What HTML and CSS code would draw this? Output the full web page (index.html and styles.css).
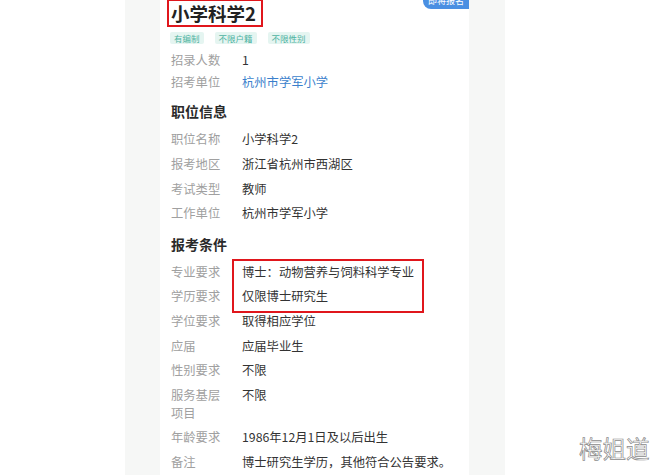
FILE: index.html
```html
<!DOCTYPE html>
<html lang="zh-CN">
<head>
<meta charset="utf-8">
<link rel="stylesheet" href="styles.css">
</head>
<body>
<div class="page">
  <div class="panel">
    <div class="card">
      <div class="badge">即将报名</div>
      <div class="title">小学科学2</div>
      <div class="tags">
        <span class="tag">有编制</span>
        <span class="tag">不限户籍</span>
        <span class="tag">不限性别</span>
      </div>
      <div class="row tight"><span class="label">招录人数</span><span class="value">1</span></div>
      <div class="row tight"><span class="label">招考单位</span><span class="value link">杭州市学军小学</span></div>

      <div class="heading">职位信息</div>
      <div class="row"><span class="label">职位名称</span><span class="value">小学科学2</span></div>
      <div class="row"><span class="label">报考地区</span><span class="value">浙江省杭州市西湖区</span></div>
      <div class="row"><span class="label">考试类型</span><span class="value">教师</span></div>
      <div class="row"><span class="label">工作单位</span><span class="value">杭州市学军小学</span></div>

      <div class="heading">报考条件</div>
      <div class="highlight">
        <div class="row"><span class="label">专业要求</span><span class="value">博士：动物营养与饲料科学专业</span></div>
        <div class="row"><span class="label">学历要求</span><span class="value">仅限博士研究生</span></div>
      </div>
      <div class="row"><span class="label">学位要求</span><span class="value">取得相应学位</span></div>
      <div class="row"><span class="label">应届</span><span class="value">应届毕业生</span></div>
      <div class="row"><span class="label">性别要求</span><span class="value">不限</span></div>
      <div class="row"><span class="label">服务基层项目</span><span class="value">不限</span></div>
      <div class="row"><span class="label">年龄要求</span><span class="value">1986年12月1日及以后出生</span></div>
      <div class="row"><span class="label">备注</span><span class="value">博士研究生学历，其他符合公告要求。</span></div>
    </div>
  </div>
  <div class="watermark">梅姐道</div>
</div>
</body>
</html>
```

FILE: styles.css
```css
* { box-sizing: border-box; }
html, body {
  margin: 0;
  padding: 0;
  background: #ffffff;
}
body {
  width: 664px;
  height: 475px;
  overflow: hidden;
  font-family: "Noto Sans CJK SC", "Noto Sans", sans-serif;
}
.page {
  position: relative;
  display: flex;
  height: 475px;
  padding-left: 125px;
}
.panel {
  width: 380px;
  height: 475px;
  background: #f6f7f6;
  padding: 0 36px 0 35px;
}
.card {
  position: relative;
  width: 309px;
  height: 475px;
  background: #ffffff;
  padding-left: 11px;
}
.badge {
  position: absolute;
  top: -7px;
  right: 0;
  width: 46px;
  height: 16px;
  line-height: 16px;
  background: #4a8fe2;
  color: #ffffff;
  font-size: 9px;
  text-align: center;
  border-radius: 0 0 0 8px;
}
.title {
  display: inline-block;
  margin: -1px 0 0 -4px;
  padding: 0 5px 0 2px;
  border: 2px solid #e0161c;
  font-size: 18.5px;
  line-height: 24px;
  font-weight: 700;
  color: #222222;
}
.tags {
  display: flex;
  gap: 11px;
  margin-top: 5px;
  margin-left: -1px;
}
.tag {
  display: inline-block;
  height: 12px;
  line-height: 12px;
  padding: 0 4px;
  font-size: 8.5px;
  color: #4fb3a2;
  background: #e5f5f1;
  border-radius: 2px;
}
.row {
  display: flex;
  font-size: 12.3px;
  line-height: 17.5px;
  padding: 3.6px 0;
}
.row.tight {
  padding: 2.45px 0;
}
.tags + .row.tight { margin-top: 5.5px; }
.label {
  width: 55px;
  margin-right: 16px;
  flex: none;
  color: #a0a0a0;
}
.value {
  color: #333333;
}
.value.link {
  color: #3b7fcc;
}
.heading {
  font-size: 14px;
  line-height: 20px;
  font-weight: 700;
  color: #2a2a2a;
  margin: 7px 0 6.5px;
}
.highlight {
  position: relative;
}
.highlight::after {
  content: "";
  position: absolute;
  left: 61px;
  top: -1.5px;
  width: 188px;
  height: 50px;
  border: 2px solid #e0161c;
}
.watermark {
  position: absolute;
  left: 579px;
  top: 434px;
  font-size: 23.5px;
  line-height: 28px;
  color: #ffffff;
  -webkit-text-stroke: 0.7px #8a8a8a;
}
```
